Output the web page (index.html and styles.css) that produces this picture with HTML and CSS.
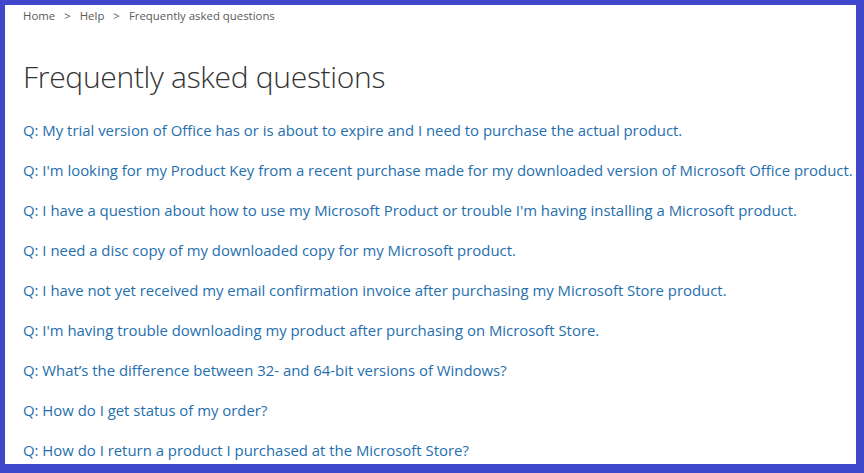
FILE: index.html
```html
<!DOCTYPE html>
<html>
<head>
<meta charset="utf-8">
<link rel="stylesheet" href="styles.css">
</head>
<body>
<div class="frame">
  <nav class="crumbs">
    <span>Home</span><span class="sep">&gt;</span><span>Help</span><span class="sep">&gt;</span><span>Frequently asked questions</span>
  </nav>
  <h1 class="title">Frequently asked questions</h1>
  <ul class="faq">
    <li><a>Q: My trial version of Office has or is about to expire and I need to purchase the actual product.</a></li>
    <li><a>Q: I'm looking for my Product Key from a recent purchase made for my downloaded version of Microsoft Office product.</a></li>
    <li><a>Q: I have a question about how to use my Microsoft Product or trouble I'm having installing a Microsoft product.</a></li>
    <li><a>Q: I need a disc copy of my downloaded copy for my Microsoft product.</a></li>
    <li><a>Q: I have not yet received my email confirmation invoice after purchasing my Microsoft Store product.</a></li>
    <li><a>Q: I'm having trouble downloading my product after purchasing on Microsoft Store.</a></li>
    <li><a>Q: What’s the difference between 32- and 64-bit versions of Windows?</a></li>
    <li><a>Q: How do I get status of my order?</a></li>
    <li><a>Q: How do I return a product I purchased at the Microsoft Store?</a></li>
  </ul>
</div>
</body>
</html>
```
FILE: styles.css
```css
html, body {
  margin: 0;
  padding: 0;
  width: 864px;
  height: 473px;
  overflow: hidden;
  background: #3f47cd;
}
body {
  padding: 5px;
  box-sizing: border-box;
  font-family: "Open Sans", "Noto Sans", sans-serif;
}
.frame {
  width: 851px;
  height: 459px;
  background: #ffffff;
  padding-left: 18px;
  box-sizing: border-box;
  overflow: hidden;
}
.crumbs {
  display: flex;
  gap: 9px;
  font-size: 11.4px;
  color: #5a5a5a;
  height: 21px;
  align-items: center;
}
.title {
  margin: 31px 0 0 0;
  font-weight: 300;
  font-size: 30px;
  line-height: 40px;
  color: #333333;
  letter-spacing: -0.3px;
}
.faq {
  list-style: none;
  margin: 13px 0 0 0;
  padding: 0;
}
.faq li {
  height: 40px;
  line-height: 40px;
  font-size: 14.9px;
  white-space: nowrap;
}
.faq a {
  color: #1f6fae;
  text-decoration: none;
}
```
